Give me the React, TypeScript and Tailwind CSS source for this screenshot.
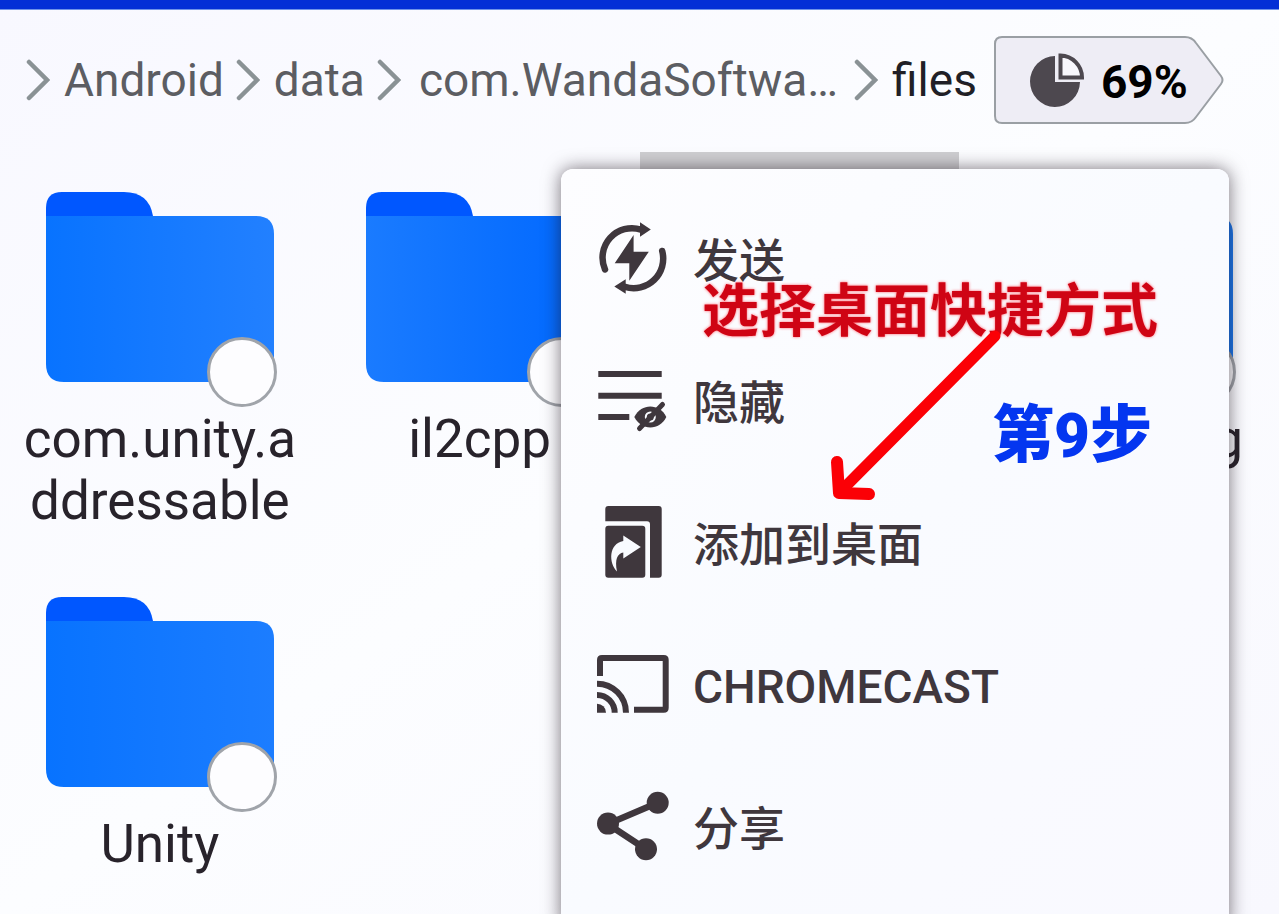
import React from "react";

interface Folder {
  id: string;
  name: string;
  selected?: boolean;
  labelClass?: string;
  from?: string;
  to?: string;
}

interface MenuItem {
  label: string;
  icon: React.ReactNode;
}

const folders: Folder[] = [
  { id: "addressable", name: "com.unity.addressable", labelClass: "px-4 text-center", from: "#0873ff", to: "#2280ff" },
  { id: "il2cpp", name: "il2cpp", labelClass: "px-4 text-center", from: "#1a7bff", to: "#0068ff" },
  { id: "selected", name: "", selected: true },
  { id: "last", name: "g", labelClass: "px-9 text-right", from: "#0873ff", to: "#1a78f0" },
  { id: "unity", name: "Unity", labelClass: "px-4 text-center", from: "#0873ff", to: "#1c7dff" },
];

const SendIcon = () => (
  <svg viewBox="0 0 72 72" className="h-18 w-18 shrink-0" fill="currentColor" aria-hidden="true">
    <g fill="none" stroke="currentColor" strokeWidth="6.5">
      <path d="M8 47.5A29.5 29.5 0 0 1 44 7.6" strokeLinecap="round" />
      <path d="M65.2 29A29.5 29.5 0 0 1 28 64.8" strokeLinecap="round" />
    </g>
    <path d="M43 .3 53.8 7.5 43 14.7zM28.7 57.3v14.4L17.3 64.5z" />
    <path d="M36.6 13v16.7h15.2L32.3 58.7V41.3H17.7z" />
  </svg>
);

const HideIcon = () => (
  <svg viewBox="0 0 72 72" className="h-18 w-18 shrink-0" fill="none" stroke="currentColor" aria-hidden="true">
    <path d="M1.3 10h63.4M1.3 31.7h63.4M1.3 53h31" strokeWidth="6" />
    <path
      d="M37.3 53C41 46 47 42.6 53.3 42.6S66 46 69.3 53C66 60 60 63.4 53.3 63.4S41 60 37.3 53z"
      fill="currentColor"
      stroke="none"
    />
    <circle cx="53.3" cy="53" r="4.5" stroke="#f9fbff" strokeWidth="2" />
    <path d="M42.5 64.5 65.5 40.5" strokeWidth="5" strokeLinecap="round" />
  </svg>
);

const ShortcutIcon = () => (
  <svg viewBox="0 0 72 72" className="h-18 w-18 shrink-0" fill="currentColor" aria-hidden="true">
    <path d="M8.3 3q0-3 3-3h50.4q3 0 3 3v65.7q0 3-3 3H53V18.3q0-3-3-3H8.3z" />
    <rect x="8.3" y="19.7" width="40" height="52" rx="3" />
    <path
      d="M26.3 29.5 43.8 41 26.3 52.5V46.5C20.5 47.500 17.500 53 20 65.500 11.500 57 11.500 37.500 26.300 35z"
      fill="#f9fbff"
    />
  </svg>
);

const CastIcon = () => (
  <svg viewBox="0 0 72 72" className="h-18 w-18 shrink-0" fill="none" stroke="currentColor" strokeWidth="6" aria-hidden="true">
    <path d="M3 28V12q0-2 2-2h61.7q2 0 2 2v47.7q0 2-2 2H37" />
    <path d="M0 35.7a29 29 0 0 1 29 29M0 47a17.7 17.7 0 0 1 17.7 17.7" />
    <path d="M0 55.7a9 9 0 0 1 9 9H0z" fill="currentColor" stroke="none" />
  </svg>
);

const ShareIcon = () => (
  <svg viewBox="0 0 72 72" className="h-18 w-18 shrink-0" fill="currentColor" aria-hidden="true">
    <path d="M60.7 12.7 10.7 34 49 59.3" fill="none" stroke="currentColor" strokeWidth="6.5" />
    <circle cx="60.7" cy="12.7" r="11" />
    <circle cx="11" cy="33.6" r="11" />
    <circle cx="49" cy="59.3" r="11" />
  </svg>
);

const menuItems: MenuItem[] = [
  { label: "发送", icon: <SendIcon /> },
  { label: "隐藏", icon: <HideIcon /> },
  { label: "添加到桌面", icon: <ShortcutIcon /> },
  { label: "CHROMECAST", icon: <CastIcon /> },
  { label: "分享", icon: <ShareIcon /> },
];

const Separator = () => (
  <svg viewBox="0 0 24 42" className="mr-3.5 ml-3 h-[42px] w-6 shrink-0" fill="none" aria-hidden="true">
    <path d="M3 3 21 21 3 39" stroke="#8a9295" strokeWidth="4.5" strokeLinecap="round" />
  </svg>
);

function Breadcrumb() {
  return (
    <nav className="flex items-center text-[46px] leading-[54px] text-[#5c5d62]">
      <Separator />
      <a href="#android">Android</a>
      <Separator />
      <a href="#data">data</a>
      <Separator />
      <a href="#package" className="px-1">
        com.WandaSoftwa…
      </a>
      <Separator />
      <a href="#files" className="text-[#211f26]">
        files
      </a>
    </nav>
  );
}

function StorageBadge() {
  return (
    <button className="relative flex h-[90px] w-[232px] shrink-0 items-center gap-4 pl-9">
      <svg viewBox="0 0 232 90" className="absolute inset-0 h-full w-full" aria-hidden="true">
        <path
          d="M9 2H192q7 0 11 6l25 33q3 4 0 8l-25 33q-4 6-11 6H9q-7 0-7-7V9q0-7 7-7z"
          fill="#eeedf5"
          stroke="#9a9fa4"
          strokeWidth="2"
        />
      </svg>
      <svg viewBox="0 0 56 56" className="relative h-14 w-14" fill="#4d484f" aria-hidden="true">
        <path d="M26 4A25 25.500 0 1 0 51 30H26z" />
        <path d="M31.500 3.500V25.500H53A22 22 0 0 0 31.500 3.500z" fill="#f8f7fc" stroke="#4d484f" strokeWidth="4" />
      </svg>
      <span className="relative pt-1 text-[46px] leading-[54px] font-bold text-black">69%</span>
    </button>
  );
}

function FolderCell({ folder }: { folder: Folder }) {
  if (folder.selected) {
    return <li className="bg-[#cfcfd2]" />;
  }

  return (
    <li className="flex flex-col items-center pt-10 pb-[25px]">
      <div className="relative">
        <svg viewBox="0 0 228 190" className="h-[190px] w-[228px]" aria-hidden="true">
          <defs>
            <linearGradient id={`fill-${folder.id}`} x1="0" y1="0" x2="1" y2="0">
              <stop offset="0" stopColor={folder.from} />
              <stop offset="1" stopColor={folder.to} />
            </linearGradient>
          </defs>
          <path d="M0 40V16Q0 0 16 0H78Q103 0 107 24V40z" fill="#0057ff" />
          <path
            d="M0 24H210Q228 24 228 42V172Q228 190 210 190H18Q0 190 0 172z"
            fill={`url(#fill-${folder.id})`}
          />
        </svg>
        <input
          type="checkbox"
          id={folder.id}
          className="absolute -right-[3px] -bottom-[25px] h-[70px] w-[70px] appearance-none rounded-full border-3 border-[#a0a4aa] bg-[#fdfdff]"
        />
      </div>
      <label
        htmlFor={folder.id}
        className={`mt-[26px] w-full text-[53px] leading-[62px] break-all text-[#28232b] ${folder.labelClass}`}
      >
        {folder.name}
      </label>
    </li>
  );
}

function ContextMenu() {
  return (
    <div
      role="menu"
      className="absolute top-[169px] right-[50px] -bottom-4 left-[561px] rounded-xl bg-linear-to-br from-[#fdfdff] via-[#f9fbff] to-[#f9f9ff] px-9 pt-[18px] shadow-[0_0_18px_rgba(30,20,30,0.6)]"
    >
      {menuItems.map((item) => (
        <button
          key={item.label}
          role="menuitem"
          className="flex h-[142px] w-full items-center gap-6 text-left text-[46px] font-medium text-[#3f373d]"
        >
          {item.icon}
          <span className="pt-1.5">{item.label}</span>
        </button>
      ))}
    </div>
  );
}

export default function App() {
  return (
    <div className="relative flex h-screen flex-col overflow-hidden bg-linear-to-br from-[#f8f8ff] via-[#fcfdff] to-[#f8f8fe] font-['Roboto','Noto_Sans_CJK_SC',sans-serif]">
      <div className="h-[10px] shrink-0 border-b border-[#6f93e8] bg-[#032fd6]" />

      <header className="flex h-[142px] shrink-0 items-center gap-4 pb-0.5 pl-3.5">
        <Breadcrumb />
        <StorageBadge />
      </header>

      <ul className="grid grid-cols-4">
        {folders.map((folder) => (
          <FolderCell key={folder.id} folder={folder} />
        ))}
      </ul>

      <ContextMenu />

      {/* Tutorial notes drawn over the menu */}
      <p className="absolute top-[270px] left-[702px] text-[57px] leading-[84px] font-bold whitespace-nowrap text-[#cf0414] [text-shadow:0_0_3px_#ff5a64]">
        选择桌面快捷方式
      </p>
      <svg
        viewBox="0 0 180 180"
        className="absolute top-[328px] left-[826px] h-[180px] w-[180px]"
        fill="none"
        stroke="#fb0006"
        strokeLinecap="round"
        strokeLinejoin="round"
        aria-hidden="true"
      >
        <path d="M169 8 14 164" strokeWidth="11" />
        <path d="M11 134 13 165 43 166" strokeWidth="12" />
      </svg>
      <p className="absolute top-[392px] left-[992px] text-[62px] leading-[88px] font-black whitespace-nowrap text-[#0436f0]">
        第9步
      </p>
    </div>
  );
}
